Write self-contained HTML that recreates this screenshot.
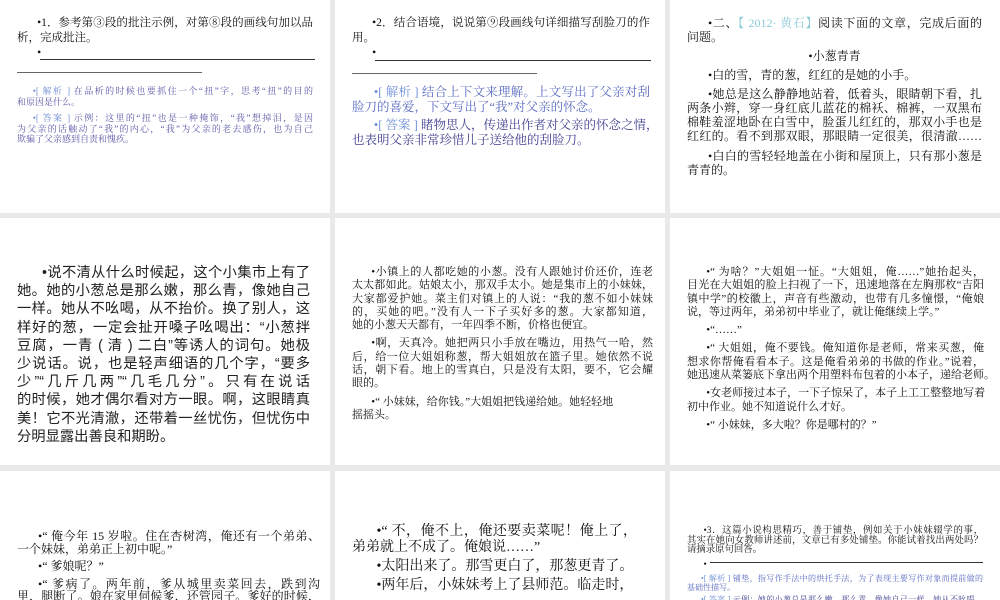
<!DOCTYPE html>
<html><head><meta charset="utf-8"><style>
*{margin:0;padding:0;box-sizing:border-box}
body{width:1000px;height:600px;background:#e9e9e9;position:relative;overflow:hidden;font-family:"Liberation Serif","Noto Serif CJK SC",serif;color:#111}
.p{position:absolute;background:#fff;overflow:hidden}
.c{position:absolute}
.l{display:block;text-align:justify;text-align-last:justify;white-space:nowrap;overflow:visible}
.e{display:block;white-space:nowrap}
.i{padding-left:1.75em}
.g{margin-top:5px}
.u{position:absolute;height:1px;background:#333}
.b1{color:#6f8fd6}.b2{color:#5060b0}
</style></head><body>

<div class="p" style="left:0;top:0;width:330px;height:213px">
 <div class="c" style="left:17px;top:16px;width:296px;font-size:11.5px;line-height:15px">
  <span class="l i">•1．参考第③段的批注示例，对第⑧段的画线句加以品</span>
  <span class="e">析，完成批注。</span>
  <span class="e i" style="margin-top:0px">•</span>
 </div>
 <div class="u" style="left:40px;top:59px;width:275px"></div>
 <div class="u" style="left:17px;top:72px;width:185px;background:#666"></div>
 <div class="c" style="left:17px;top:86px;width:296px;font-size:9px;line-height:10.5px;color:#5a5aa8">
  <span class="l i"><span class="b1">•[ 解析 ]</span> 在品析的时候也要抓住一个“扭”字，思考“扭”的目的</span>
  <span class="e">和原因是什么。</span>
  <span class="l i" style="margin-top:6px"><span class="b1">•[ 答案 ]</span> 示例：这里的“扭”也是一种掩饰，“我”想掉泪，是因</span>
  <span class="l">为父亲的话触动了“我”的内心，“我”为父亲的老去感伤，也为自己</span>
  <span class="e">欺骗了父亲感到自责和愧疚。</span>
 </div>
</div>

<div class="p" style="left:335px;top:0;width:330px;height:213px">
 <div class="c" style="left:17px;top:16px;width:298px;font-size:11.5px;line-height:15px">
  <span class="l i">•2．结合语境，说说第⑨段画线句详细描写刮脸刀的作</span>
  <span class="e">用。</span>
  <span class="e i">•</span>
 </div>
 <div class="u" style="left:40px;top:60px;width:276px"></div>
 <div class="u" style="left:17px;top:73px;width:185px;background:#666"></div>
 <div class="c" style="left:17px;top:85px;width:298px;font-size:12.5px;line-height:15px;color:#5a6ac0">
  <span class="l i"><span class="b1">•[ 解析 ]</span> 结合上下文来理解。上文写出了父亲对刮</span>
  <span class="e">脸刀的喜爱，下文写出了“我”对父亲的怀念。</span>
  <span class="l i" style="margin-top:3px;color:#404090"><span class="b1">•[ 答案 ]</span> 睹物思人，传递出作者对父亲的怀念之情，</span>
  <span class="e" style="color:#404090">也表明父亲非常珍惜儿子送给他的刮脸刀。</span>
 </div>
</div>

<div class="p" style="left:670px;top:0;width:330px;height:213px">
 <div class="c" style="left:17px;top:16px;width:295px;font-size:12px;line-height:14px">
  <span class="l i">•二、<span style="color:#8ccbd8">【 2012· 黄石】</span>阅读下面的文章，完成后面的</span>
  <span class="e">问题。</span>
  <span class="e" style="text-align:center;margin-top:5px">•小葱青青</span>
  <span class="e i" style="margin-top:5px">•白的雪，青的葱，红红的是她的小手。</span>
  <span class="l i" style="margin-top:5px">•她总是这么静静地站着，低着头，眼睛朝下看，扎</span>
  <span class="l">两条小辫，穿一身红底儿蓝花的棉袄、棉裤，一双黑布</span>
  <span class="l">棉鞋羞涩地卧在白雪中，脸蛋儿红红的，那双小手也是</span>
  <span class="l">红红的。看不到那双眼，那眼睛一定很美，很清澈……</span>
  <span class="l i" style="margin-top:6px">•白白的雪轻轻地盖在小街和屋顶上，只有那小葱是</span>
  <span class="e">青青的。</span>
 </div>
</div>

<div class="p" style="left:0;top:218px;width:330px;height:247px">
 <div class="c" style="left:17px;top:46px;width:293px;font-size:14.3px;line-height:18.2px;font-family:'Liberation Sans','Noto Sans CJK SC',sans-serif;color:#222">
  <span class="l i">•说不清从什么时候起，这个小集市上有了</span>
  <span class="l">她。她的小葱总是那么嫩，那么青，像她自己</span>
  <span class="l">一样。她从不吆喝，从不抬价。换了别人，这</span>
  <span class="l">样好的葱，一定会扯开嗓子吆喝出：“小葱拌</span>
  <span class="l">豆腐，一青 ( 清 ) 二白”等诱人的词句。她极</span>
  <span class="l">少说话。说，也是轻声细语的几个字，“要多</span>
  <span class="l">少”“几斤几两”“几毛几分”。只有在说话</span>
  <span class="l">的时候，她才偶尔看对方一眼。啊，这眼睛真</span>
  <span class="l">美！它不光清澈，还带着一丝忧伤，但忧伤中</span>
  <span class="e">分明显露出善良和期盼。</span>
 </div>
</div>

<div class="p" style="left:335px;top:218px;width:330px;height:247px">
 <div class="c" style="left:17px;top:48px;width:301px;font-size:11px;line-height:13.3px">
  <span class="l i">•小镇上的人都吃她的小葱。没有人跟她讨价还价，连老</span>
  <span class="l">太太都如此。姑娘太小，那双手太小。她是集市上的小妹妹，</span>
  <span class="l">大家都爱护她。菜主们对镇上的人说：“我的葱不如小妹妹</span>
  <span class="l">的，买她的吧。”没有人一下子买好多的葱。大家都知道，</span>
  <span class="e">她的小葱天天都有，一年四季不断，价格也便宜。</span>
  <span class="l i g">•啊，天真冷。她把两只小手放在嘴边，用热气一哈，然</span>
  <span class="l">后，给一位大姐姐称葱，帮大姐姐放在篮子里。她依然不说</span>
  <span class="l">话，朝下看。地上的雪真白，只是没有太阳，要不，它会耀</span>
  <span class="e">眼的。</span>
  <span class="e i g">•“ 小妹妹，给你钱。”大姐姐把钱递给她。她轻轻地</span>
  <span class="e">摇摇头。</span>
 </div>
</div>

<div class="p" style="left:670px;top:218px;width:330px;height:247px">
 <div class="c" style="left:17px;top:48px;width:297px;font-size:11px;line-height:13.3px">
  <span class="l i">•“ 为啥？”大姐姐一怔。“大姐姐，俺……”她抬起头，</span>
  <span class="l">目光在大姐姐的脸上扫视了一下，迅速地落在左胸那枚“吉阳</span>
  <span class="l">镇中学”的校徽上，声音有些激动，也带有几多憧憬，“俺娘</span>
  <span class="e">说，等过两年，弟弟初中毕业了，就让俺继续上学。”</span>
  <span class="e i g">•“……”</span>
  <span class="l i g">•“ 大姐姐，俺不要钱。俺知道你是老师，常来买葱，俺</span>
  <span class="l">想求你帮俺看看本子。这是俺看弟弟的书做的作业。”说着，</span>
  <span class="l">她迅速从菜篓底下拿出两个用塑料布包着的小本子，递给老师。</span>
  <span class="l i g">•女老师接过本子，一下子惊呆了，本子上工工整整地写着</span>
  <span class="e">初中作业。她不知道说什么才好。</span>
  <span class="e i g">•“ 小妹妹，多大啦？你是哪村的？”</span>
 </div>
</div>

<div class="p" style="left:0;top:471px;width:330px;height:129px">
 <div class="c" style="left:17px;top:59px;width:303px;font-size:12px;line-height:12.5px">
  <span class="l i">•“ 俺今年 15 岁啦。住在杏树湾，俺还有一个弟弟、</span>
  <span class="e">一个妹妹，弟弟正上初中呢。”</span>
  <span class="e i g">•“ 爹娘呢？”</span>
  <span class="l i g">•“ 爹病了。两年前，爹从城里卖菜回去，跌到沟</span>
  <span class="l">里，腿断了。娘在家里伺候爹，还管园子。爹好的时候，</span>
 </div>
</div>

<div class="p" style="left:335px;top:471px;width:330px;height:129px">
 <div class="c" style="left:17px;top:53px;width:285px;font-size:14px;line-height:16px">
  <span class="l i">•“ 不，俺不上，俺还要卖菜呢！俺上了，</span>
  <span class="e">弟弟就上不成了。俺娘说……”</span>
  <span class="e i" style="margin-top:3px">•太阳出来了。那雪更白了，那葱更青了。</span>
  <span class="e i" style="margin-top:3px">•两年后，小妹妹考上了县师范。临走时，</span>
 </div>
</div>

<div class="p" style="left:670px;top:471px;width:330px;height:129px">
 <div class="c" style="left:17px;top:56px;width:296px;font-size:9.4px;line-height:9.5px">
  <span class="l i">•3．这篇小说构思精巧，善于铺垫，例如关于小妹妹辍学的事，</span>
  <span class="l">其实在她向女教师讲述前，文章已有多处铺垫。你能试着找出两处吗？</span>
  <span class="e">请摘录原句回答。</span>
  <span class="e i" style="margin-top:5px">•</span>
 </div>
 <div class="u" style="left:40px;top:91px;width:273px"></div>
 <div class="c" style="left:17px;top:103px;width:296px;font-size:8px;line-height:9px;color:#5a6ac0">
  <span class="l i"><span class="b1">•[ 解析 ]</span> 铺垫，指写作手法中的烘托手法，为了表现主要写作对象而提前做的</span>
  <span class="e">基础性描写。</span>
  <span class="l i" style="margin-top:3px;color:#404090"><span class="b1">•[ 答案 ]</span> 示例：她的小葱总是那么嫩，那么青。像她自己一样。她从不吆喝，</span>
 </div>
</div>

</body></html>
